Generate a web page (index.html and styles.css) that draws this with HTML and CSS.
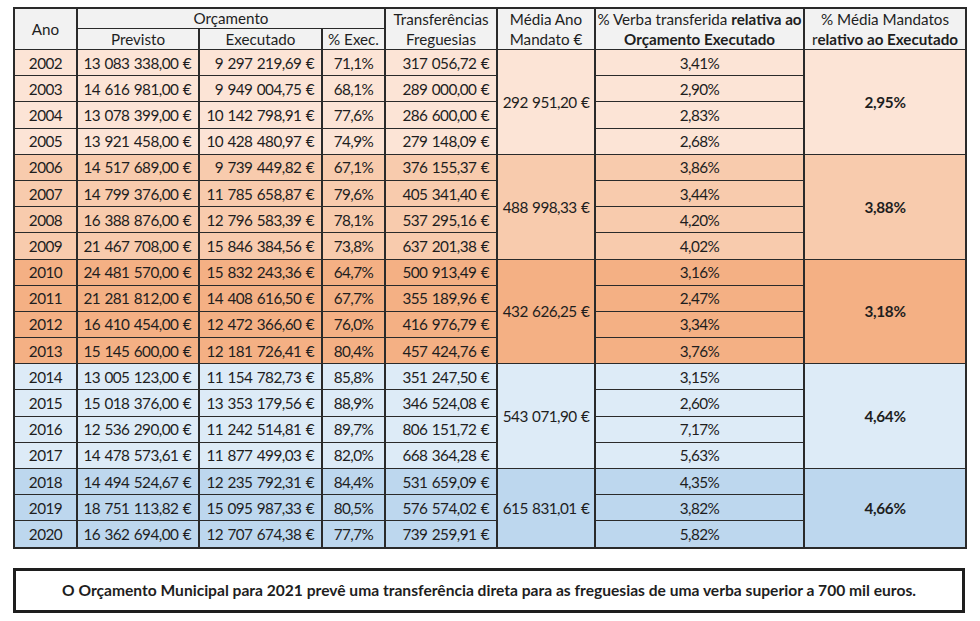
FILE: index.html
```html
<!DOCTYPE html>
<html lang="pt">
<head>
<meta charset="utf-8">
<title>Transferências para as Freguesias</title>
<link rel="stylesheet" href="styles.css">
</head>
<body>
<div class="page">
<table class="data">
  <colgroup>
    <col class="c-ano"><col class="c-prev"><col class="c-exec"><col class="c-pct"><col class="c-transf"><col class="c-media"><col class="c-verba"><col class="c-mand">
  </colgroup>
  <thead>
    <tr class="h1">
      <th rowspan="2">Ano</th>
      <th colspan="3">Orçamento</th>
      <th rowspan="2" class="two">Transferências<br>Freguesias</th>
      <th rowspan="2" class="two">Média Ano<br>Mandato €</th>
      <th rowspan="2" class="two">% Verba transferida <b>relativa ao</b><br><b>Orçamento Executado</b></th>
      <th rowspan="2" class="two">% Média Mandatos<br>r<b>elativo ao Executado</b></th>
    </tr>
    <tr class="h2">
      <th>Previsto</th><th>Executado</th><th>% Exec.</th>
    </tr>
  </thead>
  <tbody class="g1">
    <tr><td class="ano">2002</td><td class="num">13 083 338,00 €</td><td class="num">9 297 219,69 €</td><td class="ctr">71,1%</td><td class="num">317 056,72 €</td><td class="ctr" rowspan="4">292 951,20 €</td><td class="ctr">3,41%</td><td class="ctr bold" rowspan="4">2,95%</td></tr>
    <tr><td class="ano">2003</td><td class="num">14 616 981,00 €</td><td class="num">9 949 004,75 €</td><td class="ctr">68,1%</td><td class="num">289 000,00 €</td><td class="ctr">2,90%</td></tr>
    <tr><td class="ano">2004</td><td class="num">13 078 399,00 €</td><td class="num">10 142 798,91 €</td><td class="ctr">77,6%</td><td class="num">286 600,00 €</td><td class="ctr">2,83%</td></tr>
    <tr><td class="ano">2005</td><td class="num">13 921 458,00 €</td><td class="num">10 428 480,97 €</td><td class="ctr">74,9%</td><td class="num">279 148,09 €</td><td class="ctr">2,68%</td></tr>
  </tbody>
  <tbody class="g2">
    <tr><td class="ano">2006</td><td class="num">14 517 689,00 €</td><td class="num">9 739 449,82 €</td><td class="ctr">67,1%</td><td class="num">376 155,37 €</td><td class="ctr" rowspan="4">488 998,33 €</td><td class="ctr">3,86%</td><td class="ctr bold" rowspan="4">3,88%</td></tr>
    <tr><td class="ano">2007</td><td class="num">14 799 376,00 €</td><td class="num">11 785 658,87 €</td><td class="ctr">79,6%</td><td class="num">405 341,40 €</td><td class="ctr">3,44%</td></tr>
    <tr><td class="ano">2008</td><td class="num">16 388 876,00 €</td><td class="num">12 796 583,39 €</td><td class="ctr">78,1%</td><td class="num">537 295,16 €</td><td class="ctr">4,20%</td></tr>
    <tr><td class="ano">2009</td><td class="num">21 467 708,00 €</td><td class="num">15 846 384,56 €</td><td class="ctr">73,8%</td><td class="num">637 201,38 €</td><td class="ctr">4,02%</td></tr>
  </tbody>
  <tbody class="g3">
    <tr><td class="ano">2010</td><td class="num">24 481 570,00 €</td><td class="num">15 832 243,36 €</td><td class="ctr">64,7%</td><td class="num">500 913,49 €</td><td class="ctr" rowspan="4">432 626,25 €</td><td class="ctr">3,16%</td><td class="ctr bold" rowspan="4">3,18%</td></tr>
    <tr><td class="ano">2011</td><td class="num">21 281 812,00 €</td><td class="num">14 408 616,50 €</td><td class="ctr">67,7%</td><td class="num">355 189,96 €</td><td class="ctr">2,47%</td></tr>
    <tr><td class="ano">2012</td><td class="num">16 410 454,00 €</td><td class="num">12 472 366,60 €</td><td class="ctr">76,0%</td><td class="num">416 976,79 €</td><td class="ctr">3,34%</td></tr>
    <tr><td class="ano">2013</td><td class="num">15 145 600,00 €</td><td class="num">12 181 726,41 €</td><td class="ctr">80,4%</td><td class="num">457 424,76 €</td><td class="ctr">3,76%</td></tr>
  </tbody>
  <tbody class="g4">
    <tr><td class="ano">2014</td><td class="num">13 005 123,00 €</td><td class="num">11 154 782,73 €</td><td class="ctr">85,8%</td><td class="num">351 247,50 €</td><td class="ctr" rowspan="4">543 071,90 €</td><td class="ctr">3,15%</td><td class="ctr bold" rowspan="4">4,64%</td></tr>
    <tr><td class="ano">2015</td><td class="num">15 018 376,00 €</td><td class="num">13 353 179,56 €</td><td class="ctr">88,9%</td><td class="num">346 524,08 €</td><td class="ctr">2,60%</td></tr>
    <tr><td class="ano">2016</td><td class="num">12 536 290,00 €</td><td class="num">11 242 514,81 €</td><td class="ctr">89,7%</td><td class="num">806 151,72 €</td><td class="ctr">7,17%</td></tr>
    <tr><td class="ano">2017</td><td class="num">14 478 573,61 €</td><td class="num">11 877 499,03 €</td><td class="ctr">82,0%</td><td class="num">668 364,28 €</td><td class="ctr">5,63%</td></tr>
  </tbody>
  <tbody class="g5">
    <tr><td class="ano">2018</td><td class="num">14 494 524,67 €</td><td class="num">12 235 792,31 €</td><td class="ctr">84,4%</td><td class="num">531 659,09 €</td><td class="ctr" rowspan="3">615 831,01 €</td><td class="ctr">4,35%</td><td class="ctr bold" rowspan="3">4,66%</td></tr>
    <tr><td class="ano">2019</td><td class="num">18 751 113,82 €</td><td class="num">15 095 987,33 €</td><td class="ctr">80,5%</td><td class="num">576 574,02 €</td><td class="ctr">3,82%</td></tr>
    <tr><td class="ano">2020</td><td class="num">16 362 694,00 €</td><td class="num">12 707 674,38 €</td><td class="ctr">77,7%</td><td class="num">739 259,91 €</td><td class="ctr">5,82%</td></tr>
  </tbody>
</table>
<div class="note">O Orçamento Municipal para 2021 prevê uma transferência direta para as freguesias de uma verba superior a 700 mil euros.</div>
</div>
</body>
</html>
```
FILE: styles.css
```css
html, body {
  margin: 0;
  padding: 0;
  background: #ffffff;
}
.page {
  padding: 7px 15px 0 13px;
  font-family: "Lato", "Liberation Sans", sans-serif;
  font-size: 15px;
  color: #1e1e1e;
}
.data {
  border-collapse: collapse;
  width: 952px;
  table-layout: fixed;
  border: 2px solid #2a2a2a;
}
.c-ano { width: 63px; }
.c-prev { width: 122px; }
.c-exec { width: 123px; }
.c-pct { width: 63px; }
.c-transf { width: 112px; }
.c-media { width: 98px; }
.c-verba { width: 209px; }
.c-mand { width: 162px; }

.data th, .data td {
  border-top: 1px solid #2a2a2a;
  border-bottom: 1px solid #2a2a2a;
  border-left: 2px solid #2a2a2a;
  border-right: 2px solid #2a2a2a;
  padding: 0;
  white-space: nowrap;
  line-height: 18px;
}
.data th {
  background: #f2f2f2;
  font-weight: normal;
  text-align: center;
  vertical-align: middle;
  font-size: 15.2px;
}
.data th b { font-weight: bold; }
.data th.two { line-height: 20px; }
.h1 { height: 20px; }
.h2 { height: 21px; }

.data td {
  height: 25.2px;
  text-align: center;
  vertical-align: middle;
  font-size: 15.3px;
  letter-spacing: -0.55px;
  word-spacing: 1px;
}
.data td.num {
  text-align: right;
  padding-right: 7px;
}
.data td.bold {
  font-weight: bold;
  letter-spacing: -0.3px;
}

.g1 td { background: #fce4d6; }
.g2 td { background: #f8cbad; }
.g3 td { background: #f4b084; }
.g4 td { background: #ddebf7; }
.g5 td { background: #bdd7ee; }

.note {
  margin-top: 19px;
  width: 946px;
  height: 39px;
  border: 3px solid #1e1e1e;
  display: flex;
  align-items: center;
  justify-content: center;
  font-weight: bold;
  font-size: 15.6px;
}
```
